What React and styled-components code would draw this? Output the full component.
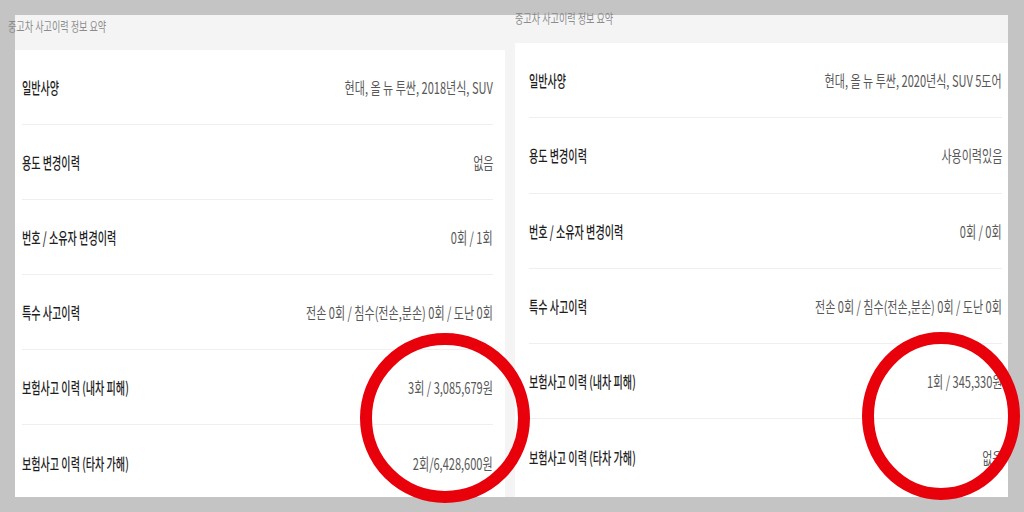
import React from "react";
import styled, { createGlobalStyle } from "styled-components";

const Global = createGlobalStyle`
  html, body { margin: 0; padding: 0; }
  body {
    width: 1024px;
    height: 512px;
    overflow: hidden;
    background: #c4c4c4;
    font-family: "Noto Sans CJK KR", "Noto Sans", sans-serif;
  }
`;

const Page = styled.div`
  position: relative;
  box-sizing: border-box;
  width: 1024px;
  height: 512px;
  padding: 15px 16px 15px 15px;
  display: flex;
  background: #c4c4c4;
`;

const Panel = styled.section`
  box-sizing: border-box;
  width: ${(p) => p.$width}px;
  height: 100%;
  background: #f4f4f4;
  display: flex;
  flex-direction: column;
  padding: ${(p) => p.$pad};
`;

const Title = styled.div`
  flex: 0 0 ${(p) => p.$height}px;
  margin: ${(p) => p.$margin};
  display: flex;
  align-items: center;
  white-space: nowrap;
`;

const TitleText = styled.span`
  display: inline-block;
  font-size: 13px;
  color: #8c8c8c;
  transform: scaleX(0.7);
  transform-origin: left center;
`;

const Card = styled.div`
  flex: 1;
  min-height: 0;
  background: #ffffff;
  overflow: hidden;
  display: flex;
  flex-direction: column;
`;

const Row = styled.div`
  flex: 0 0 ${(p) => p.$h}px;
  box-sizing: border-box;
  display: flex;
  align-items: center;
  justify-content: space-between;
  margin: ${(p) => p.$margin};
  border-bottom: 1px solid #efefef;
  white-space: nowrap;
  &:last-child { border-bottom: none; }
`;

const Label = styled.span`
  display: inline-block;
  font-size: 16px;
  font-weight: 500;
  color: #1e1e1e;
  transform: scaleX(0.63);
  transform-origin: left center;
`;

const Value = styled.span`
  display: inline-block;
  font-size: 16px;
  font-weight: 400;
  color: #585858;
  transform: scaleX(0.69);
  transform-origin: right center;
`;

const Overlay = styled.svg`
  position: absolute;
  left: 0;
  top: 0;
  pointer-events: none;
`;

const left = [
  ["일반사양", "현대, 올 뉴 투싼, 2018년식, SUV"],
  ["용도 변경이력", "없음"],
  ["번호 / 소유자 변경이력", "0회 / 1회"],
  ["특수 사고이력", "전손 0회 / 침수(전손,분손) 0회 / 도난 0회"],
  ["보험사고 이력 (내차 피해)", "3회 / 3,085,679원"],
  ["보험사고 이력 (타차 가해)", "2회/6,428,600원"],
];

const right = [
  ["일반사양", "현대, 올 뉴 투싼, 2020년식, SUV 5도어"],
  ["용도 변경이력", "사용이력있음"],
  ["번호 / 소유자 변경이력", "0회 / 0회"],
  ["특수 사고이력", "전손 0회 / 침수(전손,분손) 0회 / 도난 0회"],
  ["보험사고 이력 (내차 피해)", "1회 / 345,330원"],
  ["보험사고 이력 (타차 가해)", "없음"],
];

export default function App() {
  return (
    <>
      <Global />
      <Page>
        <Panel $width={495} $pad="0 5px 0 0">
          <Title $height={20} $margin="0 0 15px -7px">
            <TitleText>중고차 사고이력 정보 요약</TitleText>
          </Title>
          <Card>
            {left.map(([l, v]) => (
              <Row key={l} $h={75} $margin="0 12px 0 7px">
                <Label>{l}</Label>
                <Value>{v}</Value>
              </Row>
            ))}
          </Card>
        </Panel>
        <Panel $width={498} $pad="0 0 0 5px">
          <Title $height={28} $margin="-12px 0 12px 0">
            <TitleText>중고차 사고이력 정보 요약</TitleText>
          </Title>
          <Card>
            {right.map(([l, v]) => (
              <Row key={l} $h={75.3} $margin="0 6px 0 14px">
                <Label>{l}</Label>
                <Value>{v}</Value>
              </Row>
            ))}
          </Card>
        </Panel>
        <Overlay width="1024" height="512" viewBox="0 0 1024 512">
          <ellipse cx="445" cy="418" rx="79" ry="79" fill="none" stroke="#e8000b" strokeWidth="12" />
          <ellipse cx="941" cy="416" rx="73" ry="78" fill="none" stroke="#e8000b" strokeWidth="12" />
        </Overlay>
      </Page>
    </>
  );
}
